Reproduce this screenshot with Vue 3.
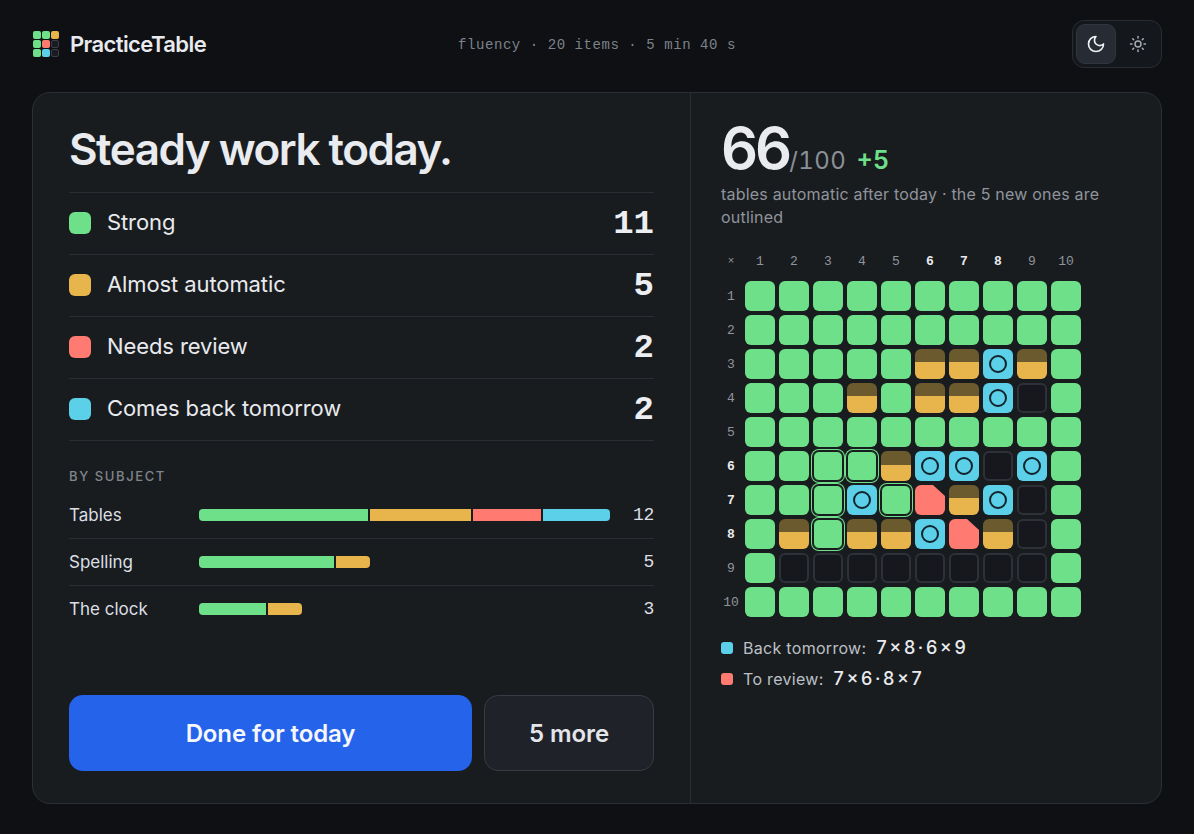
<template>
  <div class="page">
    <header class="topbar">
      <div class="brand">
        <div class="logo">
          <i v-for="(c, i) in logoCells" :key="i" :class="c"></i>
        </div>
        <span class="brand-name">PracticeTable</span>
      </div>
      <div class="session">fluency · 20 items · 5 min 40 s</div>
      <div class="theme-wrap">
        <div class="theme">
          <button class="theme-btn on">
            <svg width="20" height="20" viewBox="0 0 24 24" fill="none" stroke="currentColor" stroke-width="2" stroke-linecap="round" stroke-linejoin="round">
              <path d="M12 3a6 6 0 0 0 9 9 9 9 0 1 1-9-9Z" />
            </svg>
          </button>
          <button class="theme-btn">
            <svg width="18" height="18" viewBox="0 0 24 24" fill="none" stroke="currentColor" stroke-width="2" stroke-linecap="round" stroke-linejoin="round">
              <circle cx="12" cy="12" r="4" />
              <path d="M12 2v2M12 20v2M4.93 4.93l1.41 1.41M17.66 17.66l1.41 1.41M2 12h2M20 12h2M6.34 17.66l-1.41 1.41M19.07 4.93l-1.41 1.41" />
            </svg>
          </button>
        </div>
      </div>
    </header>

    <main class="card">
      <section class="left">
        <h1>Steady work today.</h1>
        <div class="stats">
          <div v-for="s in stats" :key="s.label" class="stat">
            <span :class="['swatch', s.tone]"></span>
            <span class="stat-label">{{ s.label }}</span>
            <span class="stat-value">{{ s.value }}</span>
          </div>
        </div>

        <div class="subject-title">BY SUBJECT</div>
        <div class="subjects">
          <div v-for="s in subjects" :key="s.name" class="subject">
            <span class="subject-name">{{ s.name }}</span>
            <div class="bar-track">
              <div class="bar" :style="{ width: (s.total / 12) * 100 + '%' }">
                <i v-for="p in s.parts" :key="p[0]" :class="p[0]" :style="{ flexGrow: p[1] }"></i>
              </div>
            </div>
            <span class="subject-count">{{ s.total }}</span>
          </div>
        </div>

        <div class="actions">
          <button class="done">Done for today</button>
          <button class="more">5 more</button>
        </div>
      </section>

      <section class="right">
        <div class="score">
          <span class="score-big">66</span><span class="score-of">/100</span>
          <span class="score-plus">+5</span>
        </div>
        <p class="score-note">tables automatic after today · the 5 new ones are outlined</p>

        <div class="table">
          <span class="head corner">×</span>
          <span v-for="n in 10" :key="'c' + n" :class="['head', { hot: hot.includes(n) }]">{{ n }}</span>
          <template v-for="(row, r) in rows" :key="r">
            <span :class="['head', { hot: hot.includes(r + 1) }]">{{ r + 1 }}</span>
            <div v-for="(c, i) in row" :key="i" :class="['cell', cellClass[c]]">
              <i v-if="c === 'b'" class="ring"></i>
            </div>
          </template>
        </div>

        <div class="legend">
          <div class="legend-row">
            <span class="dot blue"></span>
            <span class="legend-label">Back tomorrow:</span>
            <span class="legend-vals">7 × 8 · 6 × 9</span>
          </div>
          <div class="legend-row">
            <span class="dot red"></span>
            <span class="legend-label">To review:</span>
            <span class="legend-vals">7 × 6 · 8 × 7</span>
          </div>
        </div>
      </section>
    </main>
  </div>
</template>

<script setup>
const logoCells = ['green', 'green', 'amber', 'green', 'red', 'empty', 'green', 'blue', 'empty']

const stats = [
  { label: 'Strong', value: 11, tone: 'green' },
  { label: 'Almost automatic', value: 5, tone: 'amber' },
  { label: 'Needs review', value: 2, tone: 'red' },
  { label: 'Comes back tomorrow', value: 2, tone: 'blue' }
]

const subjects = [
  { name: 'Tables', total: 12, parts: [['green', 5], ['amber', 3], ['red', 2], ['blue', 2]] },
  { name: 'Spelling', total: 5, parts: [['green', 4], ['amber', 1]] },
  { name: 'The clock', total: 3, parts: [['green', 2], ['amber', 1]] }
]

const hot = [6, 7, 8]

// g strong, n newly strong, a almost, b back tomorrow, r review, e empty
const rows = [
  'gggggggggg',
  'gggggggggg',
  'gggggaabag',
  'gggagaabeg',
  'gggggggggg',
  'ggnnabbebg',
  'ggnbnrabeg',
  'ganaabraeg',
  'geeeeeeeeg',
  'gggggggggg'
].map((r) => r.split(''))

const cellClass = {
  g: 'c-green',
  n: 'c-new',
  a: 'c-amber',
  b: 'c-blue',
  r: 'c-red',
  e: 'c-empty'
}
</script>

<style>
html,
body {
  margin: 0;
  background: #0e1014;
}
</style>

<style scoped>
.page {
  width: 1194px;
  height: 834px;
  box-sizing: border-box;
  display: flex;
  flex-direction: column;
  padding: 20px 32px 30px;
  background: #0e1014;
  color: #e8eaee;
  font-family: Inter, "Liberation Sans", sans-serif;
  overflow: hidden;
}

.green { background: #6ee08a; }
.amber { background: #e8b54c; }
.red { background: #ff7a70; }
.blue { background: #5bd0e8; }

.topbar {
  display: grid;
  grid-template-columns: 1fr auto 1fr;
  align-items: center;
  height: 48px;
  margin-bottom: 24px;
}

.brand {
  display: flex;
  align-items: center;
  gap: 11px;
}

.logo {
  display: grid;
  grid-template-columns: repeat(3, 8px);
  grid-auto-rows: 8px;
  gap: 1px;
  margin-left: 1px;
}

.logo i {
  border-radius: 2px;
  box-sizing: border-box;
}

.logo .empty {
  background: #181b20;
  border: 1px solid #3a3d45;
}

.brand-name {
  font-size: 22px;
  font-weight: 600;
  letter-spacing: -0.6px;
}

.session {
  padding-top: 1px;
  font-family: "Liberation Mono", monospace;
  font-size: 14px;
  letter-spacing: 0.56px;
  color: #7d828a;
}

.theme-wrap {
  display: flex;
  justify-content: flex-end;
}

.theme {
  display: flex;
  gap: 2px;
  padding: 3px;
  border: 1px solid #292c33;
  border-radius: 12px;
  background: #14171b;
}

.theme-btn {
  width: 40px;
  height: 40px;
  padding: 0;
  display: flex;
  align-items: center;
  justify-content: center;
  border: 1px solid transparent;
  border-radius: 9px;
  background: none;
  color: #a6abb3;
}

.theme-btn.on {
  background: #272b33;
  border-color: #30343c;
  color: #f0f2f5;
}

.card {
  flex: 1;
  display: flex;
  min-height: 0;
  box-sizing: border-box;
  background: #191c1f;
  border: 1px solid #2b2e34;
  border-radius: 18px;
}

.left {
  width: 658px;
  box-sizing: border-box;
  display: flex;
  flex-direction: column;
  padding: 28px 36px 32px;
  border-right: 1px solid #2b2e34;
}

h1 {
  margin: 0 0 15px;
  font-size: 44px;
  line-height: 56px;
  font-weight: 600;
  letter-spacing: -1.5px;
  color: #e9ebef;
}

.stats {
  border-top: 1px solid #2a2d33;
}

.stat {
  display: flex;
  align-items: center;
  height: 61px;
  border-bottom: 1px solid #2a2d33;
}

.swatch {
  width: 22px;
  height: 22px;
  margin-top: -1px;
  border-radius: 6px;
  margin-right: 16px;
}

.stat-label {
  flex: 1;
  margin-top: -3px;
  font-size: 22px;
  letter-spacing: -0.1px;
  color: #e8eaee;
}

.stat-value {
  font-family: "Liberation Mono", monospace;
  font-size: 34px;
  font-weight: 700;
  color: #eceef1;
}

.subject-title {
  margin-top: 27px;
  font-size: 13px;
  font-weight: 500;
  letter-spacing: 1.6px;
  color: #80858d;
}

.subjects {
  margin-top: 8px;
}

.subject {
  display: flex;
  align-items: center;
  height: 46px;
  border-bottom: 1px solid #2a2d33;
}

.subject:last-child {
  border-bottom: none;
}

.subject-name {
  width: 130px;
  font-size: 17px;
  color: #dcdfe4;
}

.bar-track {
  width: 411px;
}

.bar {
  display: flex;
  gap: 2px;
  height: 12px;
  border-radius: 4px;
  overflow: hidden;
}

.bar i {
  flex-basis: 0;
}

.subject-count {
  flex: 1;
  text-align: right;
  font-family: "Liberation Mono", monospace;
  font-size: 18px;
  letter-spacing: -0.3px;
  color: #dcdfe4;
}

.actions {
  margin-top: auto;
  display: flex;
  gap: 12px;
}

.actions button {
  height: 76px;
  border-radius: 14px;
  font-family: inherit;
  font-size: 24px;
  font-weight: 600;
  letter-spacing: -0.1px;
}

.done {
  flex: 1;
  background: #2563eb;
  border: none;
  color: #f5f7fb;
}

.more {
  width: 170px;
  background: #20222a;
  border: 1px solid #383b43;
  color: #e4e6ea;
}

.right {
  flex: 1;
  padding: 20px 30px 0;
  min-width: 0;
}

.score {
  display: flex;
  align-items: baseline;
  height: 70px;
}

.score-big {
  font-size: 58px;
  font-weight: 600;
  letter-spacing: -3px;
  color: #e9ebef;
}

.score-of {
  font-size: 24px;
  font-variant-numeric: tabular-nums;
  letter-spacing: 0.4px;
  color: #8b9098;
}

.score-plus {
  margin-left: 10px;
  font-size: 25px;
  font-weight: 600;
  color: #6ee08a;
}

.score-note {
  margin: 0;
  font-size: 16px;
  line-height: 23px;
  letter-spacing: 0.2px;
  color: #8f949c;
}

.table {
  display: grid;
  grid-template-columns: 20px repeat(10, 30px);
  grid-template-rows: 32px repeat(10, 30px);
  gap: 4px;
  margin-top: 16px;
}

.head {
  display: flex;
  align-items: center;
  justify-content: center;
  font-family: "Liberation Mono", monospace;
  font-size: 13px;
  color: #8f949c;
}

.corner {
  font-size: 11px;
}

.head.hot {
  color: #e8eaee;
  font-weight: 700;
}

.cell {
  width: 30px;
  height: 30px;
  box-sizing: border-box;
  border-radius: 6px;
  display: flex;
  align-items: center;
  justify-content: center;
}

.c-green {
  background: #6ee08a;
}

.c-new {
  background: #6ee08a;
  border: 1px solid #191c1f;
  box-shadow: 0 0 0 1px #191c1f, 0 0 0 2px #6ee08a;
}

.c-amber {
  background: linear-gradient(#6b5a2e 45%, #e8b54c 45%);
}

.c-blue {
  background: #5bd0e8;
}

.ring {
  width: 18px;
  height: 18px;
  box-sizing: border-box;
  border: 2px solid #12232c;
  border-radius: 50%;
}

.c-red {
  background: #ff7a70;
  clip-path: polygon(0 0, 18px 0, 100% 11px, 100% 100%, 0 100%);
}

.c-empty {
  background: #16181e;
  border: 2px solid #2f3139;
}

.legend {
  margin-top: 15px;
}

.legend-row {
  display: flex;
  align-items: center;
  height: 31px;
}

.dot {
  width: 12px;
  height: 12px;
  border-radius: 3px;
  margin-right: 10px;
}

.legend-label {
  font-size: 16px;
  letter-spacing: 0.3px;
  color: #bcc0c6;
}

.legend-vals {
  margin-left: 10px;
  font-size: 18px;
  font-weight: 500;
  word-spacing: -2.2px;
  color: #e8eaee;
}
</style>
